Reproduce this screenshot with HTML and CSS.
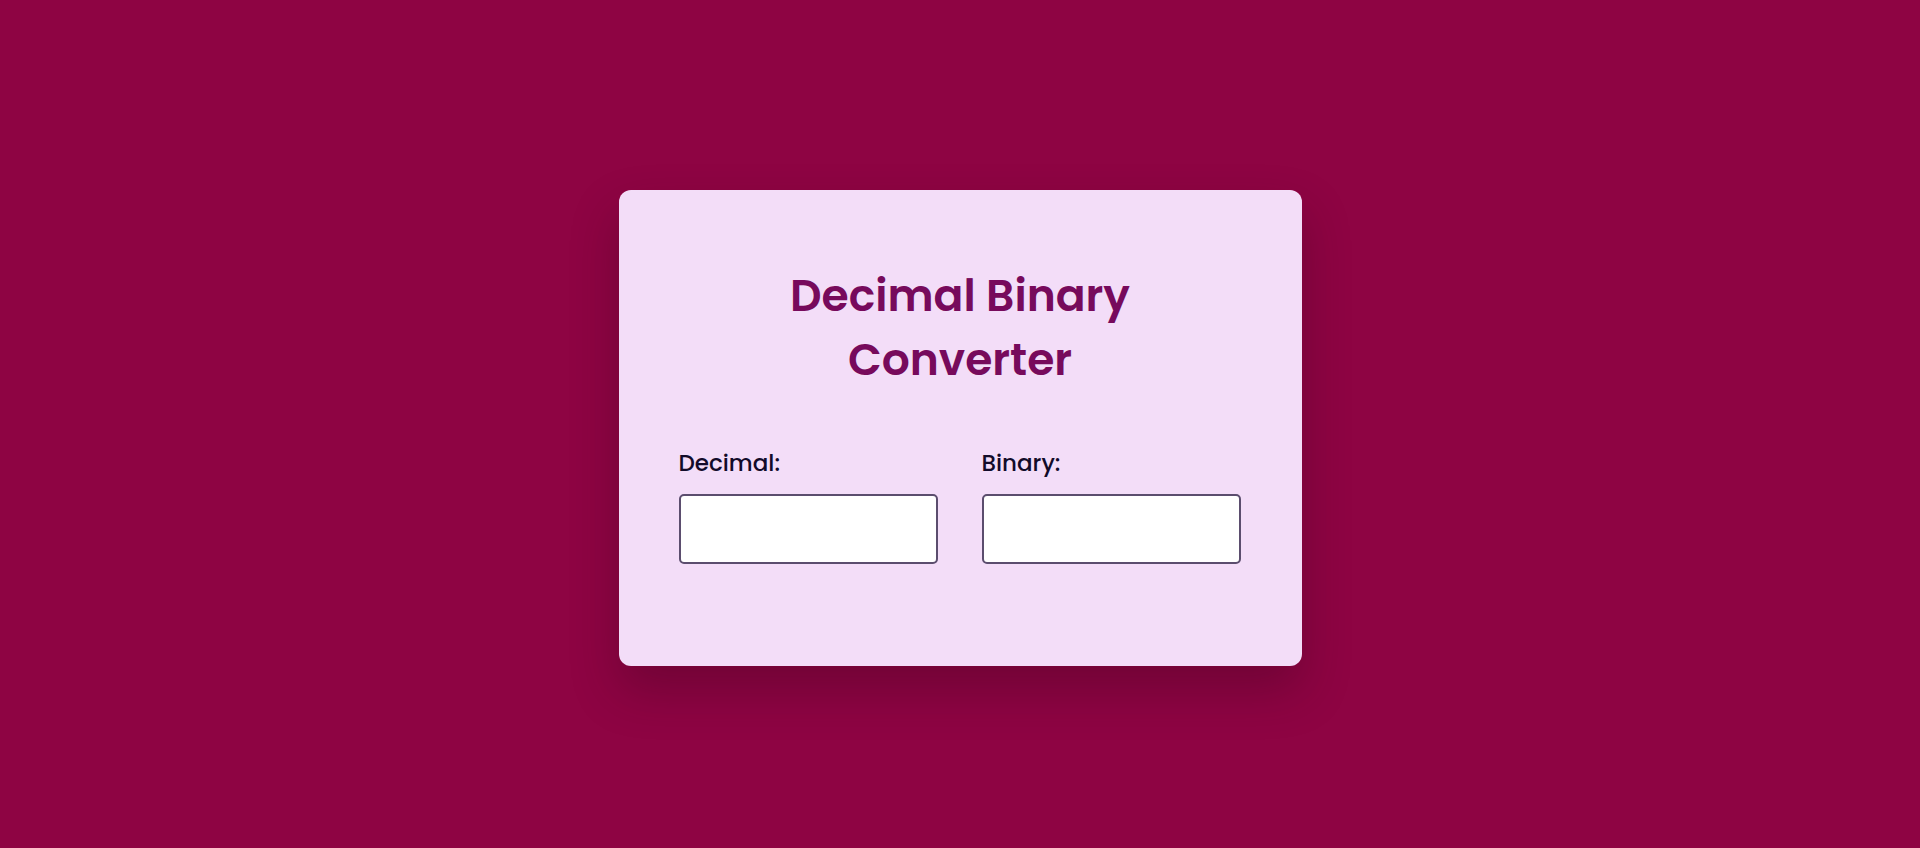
FILE: index.html
```html
<!DOCTYPE html>
<html lang="en">
<head>
<meta charset="utf-8">
<title>Decimal Binary Converter</title>
<link rel="stylesheet" href="styles.css">
</head>
<body>
<main class="page">
  <section class="card">
    <h1 class="title">Decimal Binary<br>Converter</h1>
    <div class="fields">
      <div class="field">
        <label class="label" for="decimal">Decimal:</label>
        <input class="input" id="decimal" type="text">
      </div>
      <div class="field">
        <label class="label" for="binary">Binary:</label>
        <input class="input" id="binary" type="text">
      </div>
    </div>
  </section>
</main>
</body>
</html>
```

FILE: styles.css
```css
* { box-sizing: border-box; }
html, body { margin: 0; padding: 0; }
body {
  background: #8e0443;
  font-family: "Poppins", "Lato", "Noto Sans", sans-serif;
}
.page {
  min-height: 100vh;
  padding-top: 8px;
  display: flex;
  align-items: center;
  justify-content: center;
}
.card {
  width: 683px;
  height: 476px;
  background: #f3ddf8;
  border-radius: 12px;
  box-shadow: 0 24px 48px rgba(40, 0, 20, 0.28);
  padding: 74px 60px 0 60px;
}
.title {
  margin: 0 auto;
  text-align: center;
  color: #770a5c;
  font-size: 44px;
  font-weight: 600;
  line-height: 64px;
}
.fields {
  display: grid;
  grid-template-columns: 259px 259px;
  column-gap: 44px;
  margin-top: 56px;
}
.field {
  display: flex;
  flex-direction: column;
}
.label {
  color: #120b2a;
  font-size: 23px;
  font-weight: 500;
  line-height: 30px;
  margin-bottom: 16px;
}
.input {
  width: 259px;
  height: 70px;
  border: 2px solid #5b4d6e;
  border-radius: 5px;
  background: #ffffff;
  outline: none;
}
```
